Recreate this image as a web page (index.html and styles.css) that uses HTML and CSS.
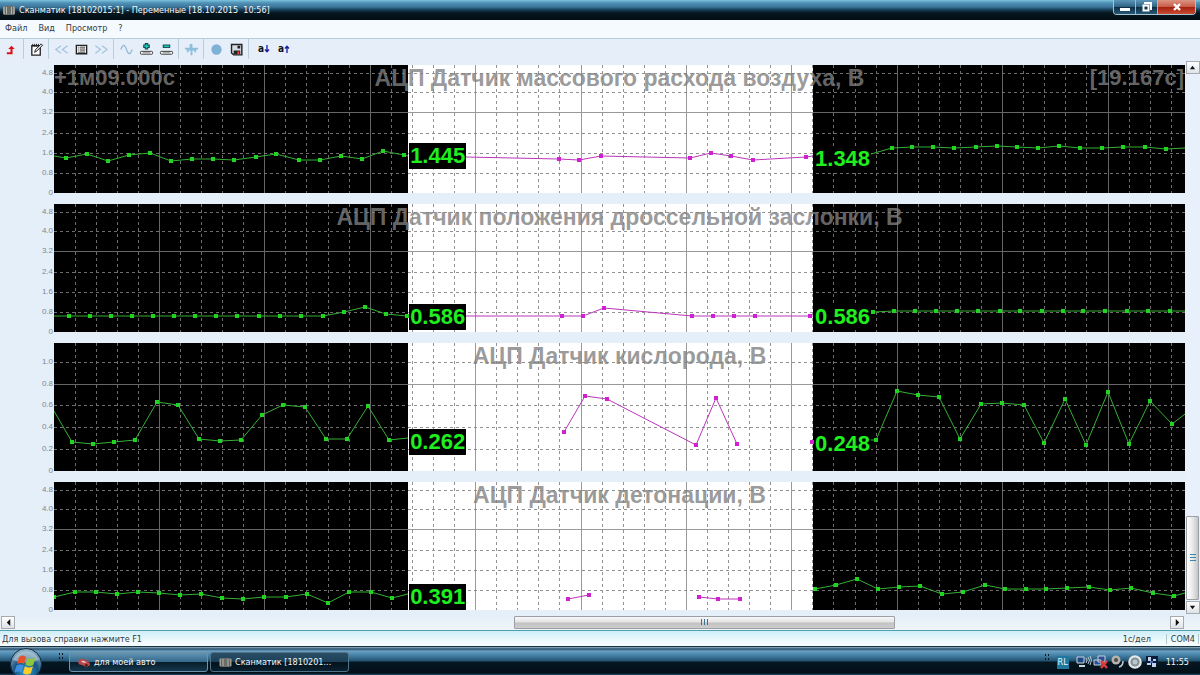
FILE: index.html
```html
<!DOCTYPE html>
<html lang="ru">
<head>
<meta charset="utf-8">
<title>Сканматик [18102015:1] - Переменные</title>
<link rel="stylesheet" href="styles.css">
</head>
<body>
<header class="titlebar">
  <svg class="app-icon" viewBox="0 0 12 11"><path d="M0 2l2-1v9l-2-1zM10 1l2 1v7l-2 1z" fill="#9a9d96"/><path d="M2 1h8v9H2z" fill="#6c6f69"/><path d="M3 2h1v7H3zM8 2h1v7H8z" fill="#b4b5ac"/></svg>
  <h1 class="window-title">Сканматик [18102015:1] - Переменные [18.10.2015&nbsp; 10:56]</h1>
  <div class="window-buttons">
    <button class="wbtn" aria-label="Свернуть"><svg viewBox="0 0 12 12"><path d="M1 7h10v3H1z" fill="#fff"/></svg></button>
    <button class="wbtn" aria-label="Восстановить"><svg viewBox="0 0 12 12"><path d="M4 3V2h6v6H9M2.500 4.500h5v5h-5z" fill="none" stroke="#fff" stroke-width="2"/></svg></button>
    <button class="wbtn wbtn-close" aria-label="Закрыть"><svg viewBox="0 0 12 12"><path d="M3 3l6 6M9 3l-6 6" stroke="#fff" stroke-width="2.400"/></svg></button>
  </div>
</header>
<nav class="menubar">
  <button>Файл</button><button>Вид</button><button>Просмотр</button><button>?</button>
</nav>
<div class="toolbar">
  <button aria-label="Выход"><svg viewBox="0 0 16 16"><path d="M3 12h5V6" fill="none" stroke="#e01018" stroke-width="2.200"/><path d="M4.500 7.500L8 4l3.500 3.500z" fill="#e01018"/></svg></button>
  <span class="sep"></span>
  <button aria-label="Заметка"><svg viewBox="0 0 16 16"><path d="M3 4h9v10H3z" fill="#fff" stroke="#222" stroke-width="1.400"/><path d="M4 2v3M6 2v3M8 2v3M10 2v3" stroke="#222"/><path d="M6 11l1-3 6-6 1.500 1.500-6 6z" fill="#dde" stroke="#222"/></svg></button>
  <span class="sep"></span>
  <button aria-label="Назад"><svg viewBox="0 0 16 16"><path d="M7.500 4L2 8l5.500 4M14.500 4L9 8l5.500 4" fill="none" stroke="#a3c3dc" stroke-width="1.300"/></svg></button>
  <button aria-label="Список"><svg viewBox="0 0 16 16"><path d="M2.500 3.500h11v9h-11z" fill="#fff" stroke="#222" stroke-width="1.400"/><path d="M4 5.500h1M6 5.500h6M4 7.500h1M6 7.500h6M4 9.500h1M6 9.500h6M4 11.500h8" stroke="#333"/></svg></button>
  <button aria-label="Вперёд"><svg viewBox="0 0 16 16"><path d="M1.500 4L7 8l-5.500 4M8.500 4L14 8l-5.500 4" fill="none" stroke="#a3c3dc" stroke-width="1.300"/></svg></button>
  <span class="sep"></span>
  <button aria-label="График"><svg viewBox="0 0 16 16"><path d="M2 8c2-6 4-6 6 0s4 6 6 0" fill="none" stroke="#8fb9d4" stroke-width="1.300"/></svg></button>
  <button aria-label="Добавить"><svg viewBox="0 0 16 16"><path d="M8 1v7M4.500 4.500h7" stroke="#173c40" stroke-width="3.600"/><path d="M8 2v5M5.500 4.500h5" stroke="#15c3be" stroke-width="1.800"/><rect x="1.500" y="10" width="13" height="3" rx="1" fill="#fff" stroke="#333"/><path d="M4 11.500h8" stroke="#888"/></svg></button>
  <button aria-label="Убрать"><svg viewBox="0 0 16 16"><path d="M4 4.500h8" stroke="#173c40" stroke-width="3.600"/><path d="M5 4.500h6" stroke="#15c3be" stroke-width="1.800"/><rect x="1.500" y="10" width="13" height="3" rx="1" fill="#fff" stroke="#333"/><path d="M4 11.500h8" stroke="#888"/></svg></button>
  <span class="sep"></span>
  <button aria-label="Маркер"><svg viewBox="0 0 16 16"><path d="M1 6h5V2h3v4h6v2h-2v3h-2V9H9v5H7V9H5v2H3V8H1z" fill="#8ebedb"/></svg></button>
  <span class="sep"></span>
  <button aria-label="Запись"><svg viewBox="0 0 16 16"><circle cx="8" cy="8" r="5.500" fill="#7fb1d6"/></svg></button>
  <button aria-label="Сохранить"><svg viewBox="0 0 16 16"><path d="M2.700 2.700h11v11H5l-2.300-2z" fill="#d7dce2" stroke="#222" stroke-width="1.500"/><path d="M9 4h3v3H9zM5 9h7v4H5z" fill="#222"/><path d="M9 10h2v3H9z" fill="#e44"/></svg></button>
  <span class="sep"></span>
  <button class="sort sort-first">a<svg viewBox="0 0 6 8"><path d="M3 0v7M1 4.500l2 2.200 2-2.200" fill="none" stroke="#1a1aa8" stroke-width="1.300"/></svg></button>
  <button class="sort">a<svg viewBox="0 0 6 8"><path d="M3 8V1M1 3.500l2-2.200 2 2.200" fill="none" stroke="#1a1aa8" stroke-width="1.300"/></svg></button>
</div>
<main class="workspace">
  <div class="charts" id="charts"></div>
  <div class="vscroll">
    <button class="sbtn" aria-label="Вверх"><svg viewBox="0 0 8 8"><path d="M1 6l3-4 3 4z"/></svg></button>
    <div class="vtrack"><div class="vthumb"><i></i><i></i><i></i></div></div>
    <button class="sbtn" aria-label="Вниз"><svg viewBox="0 0 8 8"><path d="M1 2l3 4 3-4z"/></svg></button>
  </div>
</main>
<div class="hscroll">
  <button class="sbtn" aria-label="Влево"><svg viewBox="0 0 8 8"><path d="M6 0L2 4l4 4z"/></svg></button>
  <div class="htrack"><div class="hthumb"><i></i><i></i><i></i></div></div>
  <button class="sbtn" aria-label="Вправо"><svg viewBox="0 0 8 8"><path d="M2 0l4 4-4 4z"/></svg></button>
</div>
<div class="statusbar"><span class="hint">Для вызова справки нажмите F1</span><span class="scale">1с/дел</span><span class="port">COM4</span></div>
<footer class="taskbar">
  <button class="start" aria-label="Пуск"><svg viewBox="0 0 34 27">
    <defs><radialGradient id="orb" cx=".5" cy=".75" r=".7"><stop offset="0" stop-color="#2aa3d6"/><stop offset=".55" stop-color="#1a5383"/><stop offset="1" stop-color="#8fb2c4"/></radialGradient></defs>
    <circle cx="17" cy="16" r="15.500" fill="url(#orb)" stroke="#0d2d44"/>
    <path d="M4 12a14 14 0 0 1 26 0q-13 5-26 0z" fill="#d5e4ec" opacity=".5"/>
    <path d="M10 9q4-3 7 0l-2 7q-3-2-7 0z" fill="#e8502a"/><path d="M18.500 9.500q4 3 8 0l-2 7q-4 3-8 0z" fill="#8cc63f"/>
    <path d="M7.500 17.500q4-2 7 0l-2 7q-3-2-7 0z" fill="#3f8fe0"/><path d="M16 18q4 3 8 0l-2 7q-4 3-8 0z" fill="#fbcb2a"/></svg></button>
  <span class="grip"></span>
  <button class="task"><svg viewBox="0 0 14 10"><path d="M0 4l3-3 6 1 4 4v2l-4 2-4-2-4-1z" fill="#b9474b"/><path d="M3 3l4 .500 2 2-4-.500z" fill="#e8c8c8"/><circle cx="9" cy="8" r="1.500" fill="#421"/></svg><span>для моей авто</span></button>
  <button class="task task-active"><svg viewBox="0 0 12 11"><path d="M0 2l2-1v9l-2-1zM10 1l2 1v7l-2 1z" fill="#9a9d96"/><path d="M2 1h8v9H2z" fill="#6c6f69"/><path d="M3 2h1v7H3zM8 2h1v7H8z" fill="#b4b5ac"/></svg><span>Сканматик [1810201...</span></button>
  <div class="tray">
    <span class="grip"></span>
    <span class="lang">RL</span>
    <svg viewBox="0 0 16 14"><path d="M1 2h7v6H1z" fill="#1d4687" stroke="#c8d4dc"/><path d="M3 11h6" stroke="#c8d4dc" stroke-width="2"/><path d="M10 3q2 2 0 5M12 2q3 3 0 7M14 1q3 4 0 9" stroke="#b9cad6" fill="none"/></svg>
    <svg viewBox="0 0 16 14"><path d="M5 1h7v6H5zM1 5h7v5H1z" fill="#2b4f96" stroke="#c8d4dc"/><path d="M8 6l6 7M14 6l-6 7" stroke="#e23b3b" stroke-width="2.500"/></svg>
    <svg viewBox="0 0 16 14"><circle cx="6" cy="5" r="4.500" fill="#b3b3b0"/><circle cx="6" cy="5" r="2" fill="#554b46"/><path d="M9 12q4-1 4-6" stroke="#c5ccd2" stroke-width="1.500" fill="none"/></svg>
    <svg viewBox="0 0 14 14"><circle cx="7" cy="7" r="5.700" fill="#829099" stroke="#e4e8e6" stroke-width="2.200"/><circle cx="7" cy="7" r="2.500" fill="#bcc7c8"/></svg>
    <svg viewBox="0 0 16 14"><path d="M2 1h12v9H2z" fill="#0b1c38"/><path d="M4 2h3v4H4zM9 4h3v2H9zM3 8h4v2H3zM8 8h4v4H8z" fill="#c3d2e8"/><path d="M6 6h3v2H6z" fill="#3d6cc0"/></svg>
    <time class="clock">11:55</time>
  </div>
</footer>
<script src="charts.js"></script>
</body>
</html>
```
FILE: styles.css
```css
* { box-sizing: border-box; }
html, body { height: 100%; }
body {
  margin: 0;
  display: flex;
  flex-direction: column;
  overflow: hidden;
  background: #e4effa;
  font: 9px/12px "DejaVu Sans Condensed", "DejaVu Sans", sans-serif;
  color: #333b44;
}
button { font: inherit; color: inherit; border: 0; padding: 0; margin: 0; background: none; }
svg { display: block; }

.titlebar {
  flex: none;
  height: 20px;
  display: flex;
  align-items: center;
  padding: 0 4px 0 3px;
  gap: 4px;
  background: linear-gradient(#7cc4de 0, #4f90b4 3px, #3b759a 7px, #163b54 10px, #07161f 13px, #020c14 100%);
}
.app-icon { width: 12px; height: 11px; }
.window-title { margin: 0; flex: 1; font-size: 9px; font-weight: normal; color: #f2f7fa; white-space: nowrap; }
.window-buttons { display: flex; align-self: flex-start; border: 1px solid #a8c4d2; border-top: 0; border-radius: 0 0 4px 4px; overflow: hidden; }
.wbtn { width: 22px; height: 14px; display: flex; align-items: center; justify-content: center; border-right: 1px solid #9db9c8; background: linear-gradient(#5d98b8, #2c5f80 50%, #0d2c42 51%, #255a79); }
.wbtn svg { width: 12px; height: 12px; }
.wbtn-close { width: 37px; border-right: 0; background: linear-gradient(#dc9484, #c75a45 50%, #a4200f 51%, #c94b30); }

.menubar { flex: none; height: 19px; display: flex; align-items: center; gap: 11px; padding: 0 5px 2px; background: #f5fafe; border-bottom: 1px solid #b6ced9; }
.toolbar { flex: none; height: 22px; display: flex; align-items: center; padding: 0 1px 2px; background: #e5eef9; }
.toolbar button { width: 20px; height: 20px; display: flex; align-items: center; justify-content: center; }
.toolbar button svg { width: 15px; height: 15px; }
.sep { width: 1px; height: 20px; margin: 0 2px; background: #b9cddb; }
.toolbar .sort { font-weight: bold; font-size: 10px; color: #111; }
.toolbar .sort svg { width: 6px; height: 8px; }
.toolbar .sort-first { margin-left: 3px; }

.workspace { flex: 1; min-height: 0; display: flex; }
.charts { flex: 1; min-width: 0; display: grid; grid-template-rows: repeat(4, 1fr); gap: 11px; padding: 4px 0 4px; }
.chart { display: grid; grid-template-columns: 54px 1fr; min-height: 0; }
.axis { position: relative; }
.tick { position: absolute; right: 1px; transform: translateY(-50%); font: 8px/8px "Liberation Sans", Arial, sans-serif; color: #7d8791; }
.plot { position: relative; overflow: hidden; background: #fff; }
.plot svg { position: absolute; inset: 0; width: 100%; height: 100%; }
.grid { stroke: #808080; fill: none; stroke-width: 1; shape-rendering: crispEdges; }
.grid-major { stroke-opacity: .8; }
.grid-minor { stroke-dasharray: 3 3; stroke-opacity: .85; }
.trace { fill: none; stroke-width: 1; }
.trace-in { stroke: #35b035; }
.trace-out { stroke: #bb35bb; }
.dot-in { fill: #22d422; }
.dot-out { fill: #d021d0; }
.caption, .stamp, .value { position: absolute; margin: 0; font: bold 22px/26px "Liberation Sans", Arial, sans-serif; white-space: nowrap; }
.caption, .stamp { top: 0; color: rgba(128, 128, 128, .78); }
.caption { left: 0; right: 0; text-align: center; font-size: 23px; }
.stamp-start { left: 0; }
.stamp-end { right: 1px; }
.value { padding: 0 1px; color: #1fef1f; background: #000; }
.value-first { left: 31.4%; }
.value-second { left: 67.2%; }

.sbtn { flex: none; width: 14px; height: 13px; display: flex; align-items: center; justify-content: center; background: linear-gradient(#fff, #dfe3e6); border: 1px solid #a5abb0; }
.sbtn svg { width: 7px; height: 7px; fill: #111; }
.vscroll { flex: none; width: 15px; display: flex; flex-direction: column; align-items: center; background: #e8f1fb; }
.vtrack { flex: 1; width: 13px; display: grid; grid-template-rows: 442fr 84fr 1fr; }
.vthumb { grid-row: 2; display: flex; flex-direction: column; align-items: center; justify-content: center; gap: 1px; border: 1px solid #9aa0a5; border-radius: 1px; background: linear-gradient(90deg, #fff, #ededed 45%, #c2c5c8); }
.vthumb i { width: 6px; height: 2px; border-top: 1px solid #3a86ad; }
.hscroll { flex: none; height: 16px; display: flex; align-items: center; padding: 0 16px 0 1px; background: linear-gradient(#e4eefa, #eff4f6); }
.htrack { flex: 1; height: 13px; display: grid; grid-template-columns: 499fr 381fr 275fr; }
.hthumb { grid-column: 2; display: flex; align-items: center; justify-content: center; gap: 1px; border: 1px solid #9aa0a5; border-radius: 1px; background: linear-gradient(#f8f8f8, #e4e4e4 45%, #c2c2c2 55%, #cdcdcd); }
.hthumb i { width: 2px; height: 6px; border-left: 1px solid #3a7391; }

.statusbar { flex: none; height: 17px; display: flex; align-items: center; padding: 0 1px 0 2px; border-top: 1px solid #559eb0; border-bottom: 1px solid #173445; background: linear-gradient(#cdeef9, #f1fafd 70%, #f6fcfd); }
.hint { flex: 1; }
.scale { margin-right: 15px; }
.port { padding: 0 3px 0 4px; border-left: 1px solid #b4c6cd; border-right: 1px solid #b4c6cd; line-height: 10px; }

.taskbar { flex: none; height: 28px; display: flex; align-items: center; padding: 0 11px 0 9px; color: #f0f5f8; background: linear-gradient(#9db8c4 0, #27516e 2px, #6da0c2 4px, #4783a9 8px, #22526f 14px, #051722 15px, #030f18 26px, #1f4d68 28px); }
.start { width: 34px; height: 27px; align-self: flex-end; }
.start svg { width: 34px; height: 27px; }
.grip { width: 5px; height: 18px; margin: 0 5px 0 15px; background: radial-gradient(circle, #07141c 1px, transparent 1px) 0 0 / 3px 4px; }
.task { width: 139px; height: 20px; margin: 2px 1px 0; display: flex; align-items: center; gap: 3px; padding: 0 8px; border: 1px solid #6d94ab; border-radius: 3px; background: linear-gradient(#6193b3, #356a8c 48%, #081c2a 52%, #16384d); white-space: nowrap; }
.task svg { width: 13px; height: 11px; }
.task-active { border-color: #4e7489; background: linear-gradient(#294f67, #1d4058 48%, #04121c 52%, #0a202f); }
.tray { margin-left: auto; padding-top: 2px; display: flex; align-items: center; gap: 1px; }
.tray svg { width: 16px; height: 14px; }
.lang { width: 12px; height: 13px; margin: 0 6px 0 2px; text-align: center; background: #1f78a0; }
.clock { margin-left: 5px; }
```
FILE: charts.js
```js
// Plot space: x runs 54..1185, y runs 0..128 inside each chart.
const LEFT = 54, WIDTH = 1131, HEIGHT = 128, STEP = 21.08;
const volts5 = [[8, '4.8'], [27, '4.0'], [47, '3.2', true], [68, '2.4'], [88, '1.6'], [108, '0.8'], [128, '0']];
const volts1 = [[19, '1.0'], [41, '0.8', true], [62, '0.6'], [84, '0.4'], [106, '0.2'], [128, '0']];

// Each trace: kind, polyline points, count of leading / trailing points drawn without a marker.
const charts = [
  { title: 'АЦП Датчик массового расхода воздуха, В', start: '+1м09.000с', end: '[19.167с]', ticks: volts5,
    values: [['first', '1.445', 78], ['second', '1.348', 81]],
    traces: [
      ['in', '54,91 66,93 87,89 108,96 129,90 150,88 171,96 192,94 213,94 234,95 256,92 276,89 299,95 320,95 341,91 362,94 383,86 404,90 408,91', 1, 1],
      ['out', '466,92 559,94 579,95 601,91 690,93 711,88 731,91 753,95 806,92 813,91', 1, 1],
      ['in', '871,89 892,83 912,82 933,82 954,83 976,82 997,81 1017,82 1038,83 1059,81 1080,83 1102,83 1123,82 1145,82 1166,84 1185,83', 1, 1]] },
  { title: 'АЦП Датчик положения дроссельной заслонки, В', ticks: volts5,
    values: [['first', '0.586', 100], ['second', '0.586', 100]],
    traces: [
      ['in', '54,112 69,112 90,112 111,112 132,112 153,112 174,112 195,112 216,112 237,112 259,112 280,112 301,112 323,112 344,108 365,103 386,110 407,112', 1, 0],
      ['out', '466,112 562,112 583,112 604,104 692,112 713,112 734,112 755,112 810,112 813,112', 1, 1],
      ['in', '873,108 894,107 915,107 936,107 957,107 978,107 1000,107 1020,107 1042,107 1063,107 1083,107 1105,107 1127,107 1148,107 1170,107 1185,107', 0, 1]] },
  { title: 'АЦП Датчик кислорода, В', ticks: volts1,
    values: [['first', '0.262', 86], ['second', '0.248', 88]],
    traces: [
      ['in', '54,68 72,99 93,101 114,99 135,97 157,59 178,62 199,96 220,98 241,97 262,72 283,62 305,64 326,96 347,96 368,63 389,97 408,95', 1, 1],
      ['out', '564,89 585,53 607,56 696,102 716,55 737,101', 0, 0],
      ['out', '812,99', 0, 0],
      ['in', '871,97 876,97 897,48 918,52 939,54 960,96 981,61 1002,60 1024,62 1044,100 1065,56 1086,102 1108,49 1129,101 1150,58 1172,81 1185,71', 1, 1]] },
  { title: 'АЦП Датчик детонации, В', ticks: volts5,
    values: [['first', '0.391', 102]],
    traces: [
      ['in', '54,115 75,110 96,110 117,112 138,110 159,111 180,113 201,112 222,116 243,117 264,115 286,115 307,112 328,121 349,110 371,110 392,116 408,112', 0, 1],
      ['out', '568,117 589,113', 0, 0],
      ['out', '699,115 718,117 740,117', 0, 0],
      ['in', '815,107 836,103 857,97 878,107 899,105 920,104 942,112 963,110 985,103 1005,107 1026,107 1046,107 1067,106 1089,105 1110,108 1131,106 1153,111 1174,114 1185,111', 0, 1]] }
];

const percent = y => (y / HEIGHT * 100).toFixed(2) + '%';

function gridLines(ticks) {
  let major = '', minor = '';
  for (let k = 1; LEFT + k * STEP < LEFT + WIDTH; k++) {
    const d = `M${Math.floor(LEFT + k * STEP) + 0.5} 0V${HEIGHT}`;
    if (k % 5 === 0) major += d; else minor += d;
  }
  for (const [y, , solid] of ticks) {
    if (y >= HEIGHT) continue;
    const d = `M${LEFT} ${y + 0.5}H${LEFT + WIDTH}`;
    if (solid) major += d; else minor += d;
  }
  return `<path class="grid grid-major" d="${major}"/><path class="grid grid-minor" d="${minor}"/>`;
}

function traceMarkup([kind, points, skipStart, skipEnd]) {
  const list = points.split(' ').map(p => p.split(',').map(Number));
  const dots = list.slice(skipStart, list.length - skipEnd)
    .map(([x, y]) => `<rect class="dot-${kind}" x="${x - 2}" y="${y - 2}" width="4" height="4"/>`).join('');
  return `<polyline class="trace trace-${kind}" points="${points}"/>${dots}`;
}

document.getElementById('charts').innerHTML = charts.map(c => `
  <section class="chart">
    <div class="axis">${c.ticks.map(([y, label]) => `<span class="tick" style="top:${percent(y)}">${label}</span>`).join('')}</div>
    <div class="plot">
      <svg viewBox="${LEFT} 0 ${WIDTH} ${HEIGHT}" preserveAspectRatio="none">
        <rect x="54" y="0" width="354" height="128"/><rect x="813" y="0" width="372" height="128"/>
        ${gridLines(c.ticks)}${c.traces.map(traceMarkup).join('')}
      </svg>
      <h2 class="caption">${c.title}</h2>
      ${c.start ? `<span class="stamp stamp-start">${c.start}</span><span class="stamp stamp-end">${c.end}</span>` : ''}
      ${c.values.map(([pos, text, y]) => `<output class="value value-${pos}" style="top:${percent(y)}">${text}</output>`).join('')}
    </div>
  </section>`).join('');
```
